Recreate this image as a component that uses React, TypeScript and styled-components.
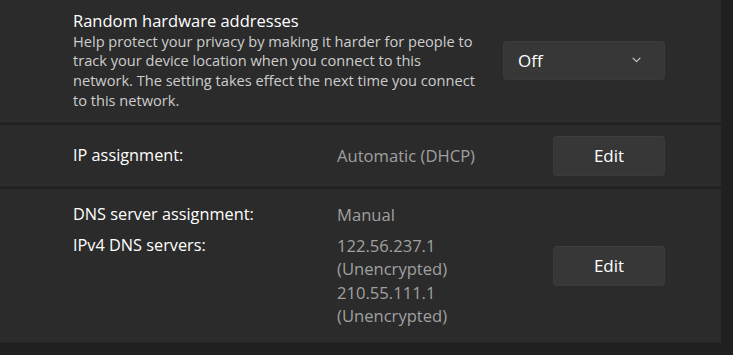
import React from "react";
import styled, { createGlobalStyle } from "styled-components";

const GlobalStyle = createGlobalStyle`
  html, body {
    margin: 0;
    padding: 0;
    background: #202020;
  }
  * {
    box-sizing: border-box;
  }
`;

const Page = styled.div`
  width: 733px;
  height: 355px;
  overflow: hidden;
  background: #202020;
  padding-right: 12px;
  display: flex;
  flex-direction: column;
  gap: 2px;
  font-family: "Open Sans", "Noto Sans", sans-serif;
  color: #ffffff;
`;

const Card = styled.section<{ $height?: number }>`
  background: #2b2b2b;
  border-bottom: 1px solid #262626;
  height: ${(p) => (p.$height ? `${p.$height}px` : "auto")};
  padding-left: 73px;
  padding-right: 56px;
  display: flex;
  align-items: center;
  flex-shrink: 0;
`;

const TopCard = styled(Card)`
  padding-bottom: 2px;
  justify-content: space-between;
`;

const TextBlock = styled.div`
  width: 404px;
  display: flex;
  flex-direction: column;
`;

const Title = styled.div`
  font-size: 16.5px;
  line-height: 22px;
  color: #ffffff;
`;

const Description = styled.div`
  font-size: 14.6px;
  line-height: 19.7px;
  color: #cdcdcd;
`;

const Dropdown = styled.button`
  width: 162px;
  height: 39px;
  border-radius: 4px;
  border: 1px solid #3a3a3a;
  border-top-color: #3d3d3d;
  background: #373737;
  color: #ffffff;
  font-family: inherit;
  font-size: 17px;
  display: flex;
  align-items: center;
  justify-content: space-between;
  padding: 0 23px 0 14px;
`;

const Chevron = () => (
  <svg width="9" height="6" viewBox="0 0 9 6" fill="none">
    <path d="M1 1.2l3.5 3.5 3.5-3.5" stroke="#d0d0d0" strokeWidth="1.1" strokeLinecap="round" strokeLinejoin="round" />
  </svg>
);

const InfoGrid = styled.div`
  flex: 1;
  display: grid;
  grid-template-columns: 264px 1fr;
  align-content: center;
  row-gap: 7px;
`;

const Label = styled.div`
  font-size: 16.3px;
  line-height: 23px;
  color: #ffffff;
`;

const Value = styled.div`
  font-size: 16.6px;
  line-height: 23.5px;
  color: #a0a0a0;
`;

const EditButton = styled.button`
  width: 112px;
  height: 40px;
  flex-shrink: 0;
  border-radius: 4px;
  border: 1px solid #3a3a3a;
  border-top-color: #3e3e3e;
  background: #373737;
  color: #ffffff;
  font-family: inherit;
  font-size: 17px;
`;

const App = () => {
  return (
    <>
      <GlobalStyle />
      <Page>
        <TopCard $height={123}>
          <TextBlock>
            <Title>Random hardware addresses</Title>
            <Description>
              Help protect your privacy by making it harder for people to track your device location when you
              connect to this network. The setting takes effect the next time you connect to this network.
            </Description>
          </TextBlock>
          <Dropdown>
            <span>Off</span>
            <Chevron />
          </Dropdown>
        </TopCard>
        <Card $height={62}>
          <InfoGrid>
            <Label>IP assignment:</Label>
            <Value>Automatic (DHCP)</Value>
          </InfoGrid>
          <EditButton>Edit</EditButton>
        </Card>
        <Card $height={154}>
          <InfoGrid>
            <Label>DNS server assignment:</Label>
            <Value>Manual</Value>
            <Label>IPv4 DNS servers:</Label>
            <Value>
              122.56.237.1
              <br />
              (Unencrypted)
              <br />
              210.55.111.1
              <br />
              (Unencrypted)
            </Value>
          </InfoGrid>
          <EditButton>Edit</EditButton>
        </Card>
      </Page>
    </>
  );
};

export default App;
